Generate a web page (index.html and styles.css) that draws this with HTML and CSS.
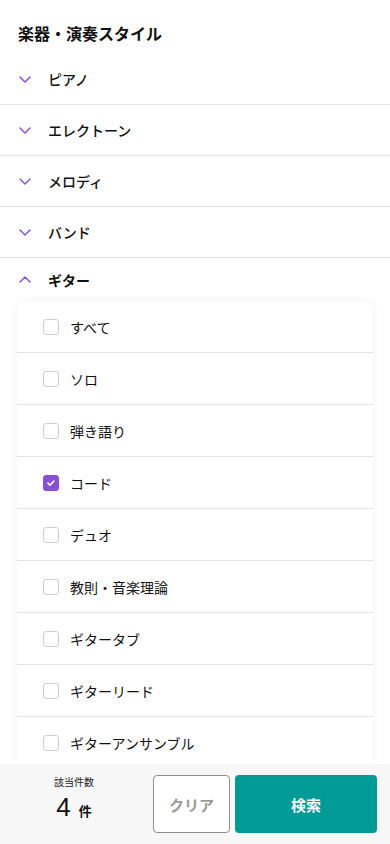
FILE: index.html
```html
<!DOCTYPE html>
<html lang="ja">
<head>
    <meta charset="UTF-8">
    <meta name="viewport" content="width=device-width, initial-scale=1.0">
    <title>楽器・演奏スタイル</title>
    <link rel="stylesheet" href="styles.css">
</head>
<body>
    <h1 class="title">楽器・演奏スタイル</h1>

    <ul class="accordion">
        <li class="acc-row">
            <svg class="chev" viewBox="0 0 12 7"><path d="M1 1l5 5 5-5"/></svg>
            <span>ピアノ</span>
        </li>
        <li class="acc-row">
            <svg class="chev" viewBox="0 0 12 7"><path d="M1 1l5 5 5-5"/></svg>
            <span>エレクトーン</span>
        </li>
        <li class="acc-row">
            <svg class="chev" viewBox="0 0 12 7"><path d="M1 1l5 5 5-5"/></svg>
            <span>メロディ</span>
        </li>
        <li class="acc-row">
            <svg class="chev" viewBox="0 0 12 7"><path d="M1 1l5 5 5-5"/></svg>
            <span>バンド</span>
        </li>
        <li class="acc-row open">
            <svg class="chev" viewBox="0 0 12 7"><path d="M1 6l5-5 5 5"/></svg>
            <span>ギター</span>
        </li>
    </ul>

    <div class="card">
        <label class="item"><span class="box"></span>すべて</label>
        <label class="item"><span class="box"></span>ソロ</label>
        <label class="item"><span class="box"></span>弾き語り</label>
        <label class="item"><span class="box checked"><svg viewBox="0 0 16 16"><path d="M4.5 8.2l2.3 2.2 4.5-4.6"/></svg></span>コード</label>
        <label class="item"><span class="box"></span>デュオ</label>
        <label class="item"><span class="box"></span>教則・音楽理論</label>
        <label class="item"><span class="box"></span>ギタータブ</label>
        <label class="item"><span class="box"></span>ギターリード</label>
        <label class="item"><span class="box"></span>ギターアンサンブル</label>
    </div>

    <footer class="bar">
        <div class="count">
            <div class="count-label">該当件数</div>
            <div class="count-num">4<small>件</small></div>
        </div>
        <button class="btn clear">クリア</button>
        <button class="btn search">検索</button>
    </footer>
</body>
</html>
```

FILE: styles.css
```css
* {
    margin: 0;
    padding: 0;
    box-sizing: border-box;
}
body {
    font-family: "Noto Sans CJK JP", "Noto Sans", sans-serif;
    color: #111;
    background: #fff;
    padding-bottom: 90px;
}

/* Heading */
.title {
    font-size: 16px;
    font-weight: 700;
    line-height: 24px;
    padding: 21px 18px 9px;
}

/* Accordion */
.accordion {
    list-style: none;
}
.acc-row {
    display: flex;
    align-items: center;
    gap: 17px;
    height: 51px;
    padding-left: 19px;
    font-size: 14px;
    font-weight: 500;
    border-bottom: 1px solid #e3e3e3;
}
.acc-row.open {
    border-bottom: none;
    height: 43px;
    font-weight: 700;
}
.chev {
    width: 12px;
    height: 7px;
    fill: none;
    stroke: #8a55d8;
    stroke-width: 1.5;
    stroke-linecap: round;
    stroke-linejoin: round;
}

/* Checkbox list */
.card {
    margin: 0 17px;
    background: #fff;
    border-radius: 10px;
    box-shadow: 0 0 8px rgba(0, 0, 0, 0.06);
}
.item {
    display: flex;
    align-items: center;
    gap: 11px;
    height: 52px;
    padding: 0 0 0 26px;
    font-size: 14px;
    border-bottom: 1px solid #e3e3e3;
}
.item:last-child {
    border-bottom: none;
}
.box {
    width: 16px;
    height: 16px;
    border: 1px solid #cfcfcf;
    border-radius: 3px;
    flex-shrink: 0;
}
.box.checked {
    background: #8a4fd8;
    border-color: #8a4fd8;
}
.box svg {
    display: block;
    width: 14px;
    height: 14px;
    fill: none;
    stroke: #fff;
    stroke-width: 1.8;
    stroke-linecap: round;
    stroke-linejoin: round;
}

/* Bottom bar */
.bar {
    position: fixed;
    left: 0;
    right: 0;
    bottom: 0;
    height: 80px;
    background: #f7f7f7;
    display: flex;
    align-items: center;
    padding-right: 13px;
    gap: 5px;
}
.count {
    width: 148px;
    text-align: center;
    flex-shrink: 0;
    padding-bottom: 8px;
}
.count-label {
    font-size: 10px;
    color: #222;
    line-height: 14px;
}
.count-num {
    font-family: "Liberation Sans", Arial, sans-serif;
    font-size: 26px;
    line-height: 28px;
    margin-top: 4px;
}
.count-num small {
    font-family: "Noto Sans CJK JP", sans-serif;
    font-size: 13px;
    font-weight: 700;
    margin-left: 8px;
}
.btn {
    height: 58px;
    border-radius: 4px;
    font-family: inherit;
    font-size: 15px;
    font-weight: 700;
    cursor: pointer;
}
.clear {
    width: 77px;
    background: #fff;
    color: #9a9a9a;
    border: 1px solid #8f8f8f;
}
.search {
    flex: 1;
    background: #009a97;
    color: #fff;
    border: none;
}
```
